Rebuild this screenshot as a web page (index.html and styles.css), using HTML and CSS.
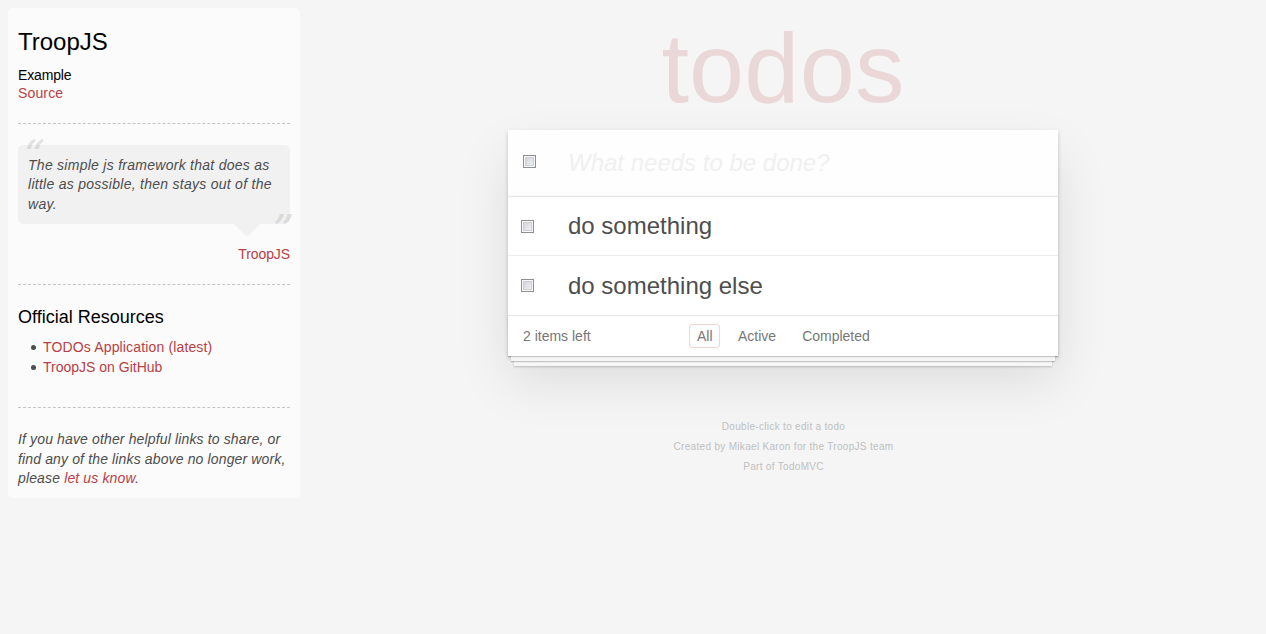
FILE: index.html
```html
<!DOCTYPE html>
<html lang="en">
<head>
<meta charset="utf-8">
<title>TroopJS • TodoMVC</title>
<link rel="stylesheet" href="styles.css">
</head>
<body>
<aside class="learn">
  <h3>TroopJS</h3>
  <h5>Example</h5>
  <a class="source" href="#">Source</a>
  <hr>
  <blockquote class="quote">
    <p>The simple js framework that does as little as possible, then stays out of the way.</p>
  </blockquote>
  <div class="cite"><a href="#">TroopJS</a></div>
  <hr>
  <h4>Official Resources</h4>
  <ul>
    <li><a class="wide" href="#">TODOs Application (latest)</a></li>
    <li><a href="#">TroopJS on GitHub</a></li>
  </ul>
  <hr>
  <p class="feedback">If you have other helpful links to share, or find any of the links above no longer work, please <a href="#">let us know</a>.</p>
</aside>
<div class="page">
  <h1>todos</h1>
  <section class="todoapp">
    <header class="row new-row">
      <span class="check"></span>
      <input class="new-todo" placeholder="What needs to be done?">
    </header>
    <ul class="list">
      <li class="row"><span class="check"></span><label>do something</label></li>
      <li class="row"><span class="check"></span><label>do something else</label></li>
    </ul>
    <footer class="footer">
      <span class="count">2 items left</span>
      <nav class="filters">
        <a class="selected" href="#">All</a>
        <a href="#">Active</a>
        <a href="#">Completed</a>
      </nav>
    </footer>
  </section>
  <div class="info">
    <p>Double-click to edit a todo</p>
    <p>Created by Mikael Karon for the TroopJS team</p>
    <p>Part of TodoMVC</p>
  </div>
</div>
</body>
</html>
```
FILE: styles.css
```css
* { box-sizing: border-box; }
html, body, h1, h3, h4, h5, p, ul, blockquote { margin: 0; padding: 0; }
body {
  display: flex;
  align-items: flex-start;
  min-height: 634px;
  background: #f5f5f5;
  color: #4d4d4d;
  font: 14px/20px "Liberation Sans", Arial, sans-serif;
}
a { color: #b83f45; text-decoration: none; }
h1, h3, h4, h5 { font-weight: normal; }

.learn {
  flex: none;
  width: 292px;
  height: 490px;
  margin: 8px 0 0 8px;
  padding: 22px 10px 0;
  border-radius: 5px;
  background: rgba(255, 255, 255, .6);
}
.learn h3 { color: #000; font-size: 24px; line-height: 24px; }
.learn h5 {
  margin-top: 12px;
  color: #000;
  font-size: 14px;
  line-height: 18px;
  letter-spacing: -.15px;
}
.source { display: block; line-height: 18px; letter-spacing: .15px; }
.learn hr {
  height: 0;
  margin: 21px 0 21px;
  border: 0;
  border-top: 1px dashed #c5c5c5;
}
.quote {
  position: relative;
  height: 79px;
  padding: 10.5px 10px 0;
  border-radius: 5px;
  background: rgba(0, 0, 0, .04);
  font-style: italic;
  line-height: 19.6px;
  letter-spacing: .27px;
}
.quote::before, .quote::after {
  position: absolute;
  color: rgba(0, 0, 0, .11);
  font: italic bold 35px/36px "DejaVu Serif", serif;
  letter-spacing: 0;
}
.quote::before { content: "“"; left: 7px; top: -10px; }
.quote::after { content: "”"; right: -4px; top: 65px; }
.quote p::after {
  content: "";
  position: absolute;
  top: 79px;
  right: 30px;
  border: 13px solid transparent;
  border-top-color: rgba(0, 0, 0, .04);
}
.cite { margin-top: 20px; text-align: right; letter-spacing: -.1px; }
.cite + hr { margin-top: 20px; }
.learn h4 { color: #000; font-size: 18px; line-height: 22px; }
.learn ul { margin-top: 9px; padding-left: 13px; list-style: none; }
.learn li { display: flex; align-items: center; }
.learn li::before {
  content: "";
  width: 5px;
  height: 5px;
  margin: 1px 7px 0 0;
  border-radius: 50%;
  background: #4d4d4d;
}
.wide { letter-spacing: .15px; }
.learn ul + hr { margin-top: 30px; }
.feedback { padding-top: 1px; font-style: italic; line-height: 19.6px; letter-spacing: .14px; }

.page {
  flex: none;
  width: 550px;
  margin-left: 208px;
}
h1 {
  height: 130px;
  padding-top: 12px;
  color: rgba(175, 47, 47, .15);
  font-size: 99px;
  line-height: 112px;
  letter-spacing: .2px;
  text-align: center;
}
.todoapp {
  background: #fff;
  box-shadow: 0 2px 4px rgba(0, 0, 0, .2), 0 25px 50px rgba(0, 0, 0, .1);
}
.row { display: flex; align-items: center; }
.new-row {
  height: 66px;
  padding-left: 15px;
  background: rgba(0, 0, 0, .003);
  box-shadow: inset 0 -1px 1px rgba(0, 0, 0, .03);
}
.check {
  flex: none;
  width: 13px;
  height: 13px;
  border: 1px solid #8e8f8f;
  background: linear-gradient(135deg, #c9cdd6, #f8f8f8) padding-box;
  box-shadow: inset 0 0 0 1px #f8f8f8, inset 0 0 0 2px #cccfd3;
}
.new-row .check { margin-bottom: 3px; }
.new-todo {
  width: 400px;
  margin-left: 32px;
  padding: 0;
  border: 0;
  background: none;
  font: 24px "Liberation Sans", Arial, sans-serif;
}
.new-todo::placeholder { color: #f0f0f0; font-style: italic; opacity: 1; }
.list { border-top: 1px solid #e6e6e6; list-style: none; }
.list .row { height: 59px; padding-left: 13px; border-bottom: 1px solid #ededed; }
.list .row + .row { border-bottom: 0; }
.list label { margin-left: 34px; font-size: 24px; line-height: 29px; }
.list .row:first-child label { padding-bottom: 2px; }
.footer {
  position: relative;
  display: flex;
  height: 41px;
  padding: 8px 15px;
  border-top: 1px solid #e6e6e6;
  color: #777;
  line-height: 24px;
  box-shadow: 0 1px 1px rgba(0, 0, 0, .2), 0 8px 0 -3px #f6f6f6,
    0 9px 1px -3px rgba(0, 0, 0, .2), 0 16px 0 -6px #f6f6f6,
    0 17px 2px -6px rgba(0, 0, 0, .2);
}
.count { width: 166px; }
.filters { display: flex; gap: 10px; }
.filters a {
  height: 24px;
  padding: 0 7px;
  border: 1px solid transparent;
  border-radius: 3px;
  color: #777;
  line-height: 22px;
}
.filters .selected { width: 31px; padding-right: 0; border-color: rgba(175, 47, 47, .2); }
.info {
  margin-top: 61px;
  padding-left: 1px;
  color: #bfbfbf;
  font-size: 10px;
  line-height: 20px;
  letter-spacing: .31px;
  text-align: center;
}
```
